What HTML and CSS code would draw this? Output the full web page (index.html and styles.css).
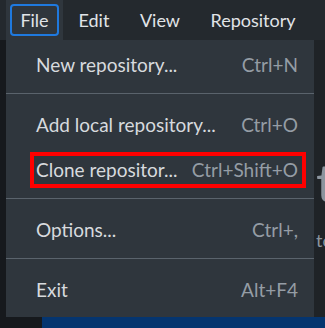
FILE: index.html
```html
<!DOCTYPE html>
<html>
<head>
<meta charset="utf-8">
<link rel="stylesheet" href="styles.css">
</head>
<body>
<div class="app">
  <header class="menubar">
    <div class="menu-item active"><span class="menu-btn">File</span></div>
    <div class="menu-item">Edit</div>
    <div class="menu-item">View</div>
    <div class="menu-item">Repository</div>
  </header>
  <div class="content">
    <aside class="side"></aside>
    <main class="main">
      <div class="hero">to get started</div>
      <div class="sub">to add a repository</div>
      <div class="spacer"></div>
      <div class="blue"></div>
    </main>
  </div>
  <div class="dropdown">
    <div class="row"><span class="label">New repository...</span><span class="key">Ctrl+N</span></div>
    <div class="sep"></div>
    <div class="row"><span class="label">Add local repository...</span><span class="key">Ctrl+O</span></div>
    <div class="row highlight"><span class="label">Clone repositor...</span><span class="key">Ctrl+Shift+O</span></div>
    <div class="sep"></div>
    <div class="row"><span class="label">Options...</span><span class="key">Ctrl+,</span></div>
    <div class="sep"></div>
    <div class="row"><span class="label">Exit</span><span class="key">Alt+F4</span></div>
  </div>
</div>
</body>
</html>
```

FILE: styles.css
```css
html, body {
  margin: 0;
  padding: 0;
  width: 325px;
  height: 328px;
  overflow: hidden;
  background: #16191d;
  font-family: "Lato", "Noto Sans", sans-serif;
}

.app {
  position: relative;
  width: 325px;
  height: 328px;
  display: flex;
  flex-direction: column;
}

.menubar {
  height: 40px;
  flex: none;
  display: flex;
  align-items: stretch;
  background: #24292e;
  padding-left: 6px;
  color: #e1e4e8;
  font-size: 18px;
}

.menu-item {
  display: flex;
  align-items: center;
  padding: 0 15px 0 15.5px;
  white-space: nowrap;
}

.menu-item.active {
  width: 57px;
  box-sizing: border-box;
  background: #2f363d;
  padding: 4px 4px;
  align-items: stretch;
}

.menu-btn {
  flex: 1;
  display: flex;
  align-items: center;
  justify-content: center;
  padding: 0 0 1px;
  border: 2px solid #1f7ae0;
  border-radius: 4px;
}

.content {
  flex: 1;
  display: flex;
  min-height: 0;
}

.side {
  width: 42px;
  flex: none;
  background: #16191d;
}

.main {
  flex: 1;
  display: flex;
  flex-direction: column;
  background: #1f2327;
  overflow: hidden;
}

.hero {
  margin-top: 112px;
  margin-left: 274px;
  font-size: 52px;
  line-height: 60px;
  color: #8b949e;
  white-space: nowrap;
}

.sub {
  margin-left: 274px;
  margin-top: 17px;
  font-size: 18px;
  color: #8b949e;
  white-space: nowrap;
}

.spacer { flex: 1; }

.blue {
  height: 11px;
  flex: none;
  background: #05356f;
}

.dropdown {
  position: absolute;
  left: 6px;
  top: 40px;
  width: 308px;
  height: 277px;
  box-sizing: border-box;
  padding-top: 2px;
  background: #2f363d;
  display: flex;
  flex-direction: column;
}

.row {
  height: 45px;
  flex: none;
  display: flex;
  align-items: center;
  justify-content: space-between;
  padding: 0 16px 0 30px;
  font-size: 19px;
  position: relative;
}

.label { color: #d7dade; }
.key { color: #959da5; }

.row.highlight::after {
  content: "";
  position: absolute;
  left: 24px;
  top: 5px;
  right: 8px;
  bottom: 4px;
  border: 4px solid #ff0000;
}

.sep {
  height: 1px;
  flex: none;
  background: #5a636c;
  margin: 6px 0 8px;
}
```
